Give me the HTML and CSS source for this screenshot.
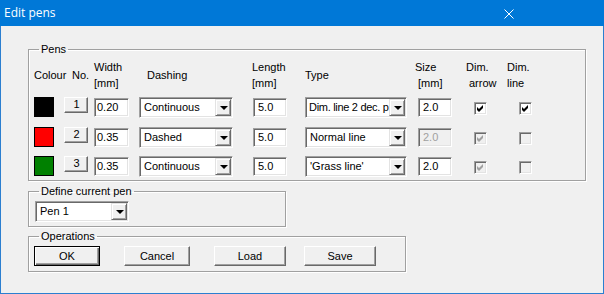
FILE: index.html
```html
<!DOCTYPE html>
<html lang="en">

<head>
    <meta charset="UTF-8">
    <title>Edit pens</title>
    <link rel="stylesheet" href="styles.css">
</head>

<body>
    <div class="window">
        <!-- title bar -->
        <div class="titlebar">
            <span class="title">Edit pens</span>
            <svg class="close" width="10" height="10" viewBox="0 0 10 10">
                <path d="M0.5 0.5 L9.5 9.5 M9.5 0.5 L0.5 9.5" stroke="#fff" stroke-width="1" fill="none" />
            </svg>
        </div>

        <div class="client">
            <!-- pens table -->
            <fieldset class="group pens-group">
                <legend>Pens</legend>
                <div class="pen-grid">
                    <div class="hd one">Colour</div>
                    <div class="hd one hd-no">No.</div>
                    <div class="hd">Width<br>[mm]</div>
                    <div class="hd one hd-dash">Dashing</div>
                    <div class="hd">Length<br>[mm]</div>
                    <div class="hd one">Type</div>
                    <div class="hd hd-size">Size<br><span class="mm">[mm]</span></div>
                    <div class="hd">Dim.<br><span class="arrow">arrow</span></div>
                    <div class="hd">Dim.<br>line</div>

                    <!-- pen 1 -->
                    <div><span class="swatch black"></span></div>
                    <div><span class="btn-no">1</span></div>
                    <div><span class="field w-width">0.20</span></div>
                    <div><div class="combo w-dash"><span class="combo-text">Continuous</span><span class="combo-btn"><i class="tri"></i></span></div></div>
                    <div><span class="field w-len pad">5.0</span></div>
                    <div><div class="combo w-type"><span class="combo-text tight">Dim. line 2 dec. p</span><span class="combo-btn"><i class="tri"></i></span></div></div>
                    <div><span class="field w-size pad">2.0</span></div>
                    <div><span class="check c-arrow"><svg width="7" height="7" viewBox="0 0 7 7"><path d="M0 2 L2 4 L6 0 V3 L2 7 L0 5 Z" fill="#000"/></svg></span></div>
                    <div><span class="check c-line"><svg width="7" height="7" viewBox="0 0 7 7"><path d="M0 2 L2 4 L6 0 V3 L2 7 L0 5 Z" fill="#000"/></svg></span></div>

                    <!-- pen 2 -->
                    <div><span class="swatch red"></span></div>
                    <div><span class="btn-no">2</span></div>
                    <div><span class="field w-width">0.35</span></div>
                    <div><div class="combo w-dash"><span class="combo-text">Dashed</span><span class="combo-btn"><i class="tri"></i></span></div></div>
                    <div><span class="field w-len pad">5.0</span></div>
                    <div><div class="combo w-type"><span class="combo-text">Normal line</span><span class="combo-btn"><i class="tri"></i></span></div></div>
                    <div><span class="field w-size pad disabled">2.0</span></div>
                    <div><span class="check c-arrow disabled"><svg width="7" height="7" viewBox="0 0 7 7"><path d="M0 2 L2 4 L6 0 V3 L2 7 L0 5 Z" fill="#a0a0a0"/></svg></span></div>
                    <div><span class="check c-line disabled"></span></div>

                    <!-- pen 3 -->
                    <div><span class="swatch green"></span></div>
                    <div><span class="btn-no">3</span></div>
                    <div><span class="field w-width">0.35</span></div>
                    <div><div class="combo w-dash"><span class="combo-text">Continuous</span><span class="combo-btn"><i class="tri"></i></span></div></div>
                    <div><span class="field w-len pad">5.0</span></div>
                    <div><div class="combo w-type"><span class="combo-text">'Grass line'</span><span class="combo-btn"><i class="tri"></i></span></div></div>
                    <div><span class="field w-size pad">2.0</span></div>
                    <div><span class="check c-arrow disabled"><svg width="7" height="7" viewBox="0 0 7 7"><path d="M0 2 L2 4 L6 0 V3 L2 7 L0 5 Z" fill="#a0a0a0"/></svg></span></div>
                    <div><span class="check c-line disabled"></span></div>
                </div>
            </fieldset>

            <!-- current pen -->
            <fieldset class="group current-group">
                <legend>Define current pen</legend>
                <div class="current-body">
                    <div class="combo w-pen"><span class="combo-text">Pen 1</span><span class="combo-btn"><i class="tri"></i></span></div>
                </div>
            </fieldset>

            <!-- operations -->
            <fieldset class="group ops-group">
                <legend>Operations</legend>
                <div class="ops-body">
                    <span class="push default b-ok">OK</span>
                    <span class="push b-cancel">Cancel</span>
                    <span class="push b-load">Load</span>
                    <span class="push b-save">Save</span>
                </div>
            </fieldset>
        </div>
    </div>
</body>

</html>
```

FILE: styles.css
```css
/* page */
body {
    margin: 0;
    font-family: "Liberation Sans", Arial, sans-serif;
    font-size: 11px;
    color: #000;
    background: #f0f0f0;
}

.window {
    width: 604px;
    height: 294px;
    box-sizing: border-box;
    border: 1px solid #2b7fd0;
    border-top: none;
    background: #f0f0f0;
}

/* title bar */
.titlebar {
    height: 26px;
    margin: 0 -1px;
    background: #0078d7;
    display: flex;
    align-items: center;
    justify-content: space-between;
    padding: 0 90px 0 4px;
}

.title {
    font-family: "Open Sans", "Noto Sans", sans-serif;
    font-size: 12px;
    color: #fff;
    margin-top: -1px;
}

.close {
    margin-top: 1px;
}

/* client area */
.client {
    padding: 17px 0 0 27px;
}

/* group boxes */
.group {
    margin: 0;
    padding: 0;
    border: 1px solid #a0a0a0;
    box-shadow: inset 1px 1px 0 #fff, 1px 1px 0 #fff;
    min-width: 0;
    box-sizing: border-box;
}

.group legend {
    margin-left: 10px;
    padding: 0 2px;
    line-height: 13px;
    font-size: 11px;
}

.pens-group {
    width: 558px;
}

.current-group {
    width: 258px;
    margin-top: 4px;
}

.ops-group {
    width: 378px;
    margin-top: 3px;
}

/* pens grid */
.pen-grid {
    display: grid;
    grid-template-columns: 30px 30px 45px 113px 53px 110px 51px 41px 40px;
    grid-template-rows: 38px 30px 29px 20px;
    padding: 3px 0 4px 5px;
}

.hd {
    line-height: 16px;
    white-space: nowrap;
}

.hd.one {
    padding-top: 8px;
}

.hd-no {
    padding-left: 8px;
}

.hd-dash {
    padding-left: 8px;
}

.hd-size .mm {
    padding-left: 3px;
}

.hd .arrow {
    padding-left: 3px;
}

/* colour swatches */
.swatch {
    display: block;
    width: 20px;
    height: 20px;
    box-sizing: border-box;
    border: 1px solid #000;
}

.black { background: #000; }
.red { background: #ff0000; }
.green { background: #008000; }

/* numbered pen buttons */
.btn-no {
    display: block;
    width: 24px;
    height: 16px;
    box-sizing: border-box;
    background: #f0f0f0;
    border-top: 1px solid #fff;
    border-left: 1px solid #fff;
    border-right: 1px solid #696969;
    border-bottom: 1px solid #696969;
    box-shadow: inset -1px -1px 0 #a0a0a0;
    text-align: center;
    line-height: 13px;
    padding-left: 1px;
}

/* sunken edit fields */
.field {
    display: block;
    height: 19px;
    box-sizing: border-box;
    margin-top: 1px;
    background: #fff;
    border-top: 1px solid #a0a0a0;
    border-left: 1px solid #a0a0a0;
    border-right: 1px solid #fff;
    border-bottom: 1px solid #fff;
    box-shadow: inset 1px 1px 0 #696969, inset -1px -1px 0 #e3e3e3;
    padding-left: 2px;
    line-height: 17px;
}

.field.pad {
    padding-left: 4px;
}

.field.disabled {
    background: #f0f0f0;
    color: #a0a0a0;
}

.w-width { width: 35px; }
.w-len { width: 34px; margin-left: 1px; }
.w-size { width: 34px; margin-left: 3px; }

/* combo boxes */
.combo {
    display: flex;
    height: 21px;
    box-sizing: border-box;
    background: #fff;
    border-top: 1px solid #a0a0a0;
    border-left: 1px solid #a0a0a0;
    border-right: 1px solid #fff;
    border-bottom: 1px solid #fff;
    box-shadow: inset 1px 1px 0 #696969, inset -1px -1px 0 #e3e3e3;
    padding: 1px;
}

.combo-text {
    flex: 1;
    overflow: hidden;
    white-space: nowrap;
    line-height: 17px;
    padding-left: 3px;
}

.combo-text.tight {
    padding-left: 2px;
    letter-spacing: -0.3px;
}

.combo-btn {
    width: 16px;
    height: 17px;
    box-sizing: border-box;
    background: #f0f0f0;
    border-top: 1px solid #e3e3e3;
    border-left: 1px solid #e3e3e3;
    border-right: 1px solid #696969;
    border-bottom: 1px solid #696969;
    box-shadow: inset 1px 1px 0 #fff, inset -1px -1px 0 #a0a0a0;
    display: flex;
    align-items: center;
    justify-content: center;
}

.tri {
    width: 0;
    height: 0;
    border-left: 4px solid transparent;
    border-right: 4px solid transparent;
    border-top: 4px solid #000;
    margin-left: 1px;
}

.w-dash { width: 94px; }
.w-type { width: 102px; }
.w-pen { width: 94px; }

/* check boxes */
.check {
    display: flex;
    align-items: center;
    justify-content: center;
    width: 13px;
    height: 13px;
    box-sizing: border-box;
    margin-top: 5px;
    background: #fff;
    border-top: 1px solid #a0a0a0;
    border-left: 1px solid #a0a0a0;
    border-right: 1px solid #fff;
    border-bottom: 1px solid #fff;
    box-shadow: inset 1px 1px 0 #696969, inset -1px -1px 0 #e3e3e3;
}

.check.disabled {
    background: #f0f0f0;
}

.c-arrow { margin-left: 8px; }
.c-line { margin-left: 12px; }

/* current pen group */
.current-body {
    padding: 3px 0 4px 6px;
}

/* operations group */
.ops-body {
    display: flex;
    padding: 3px 0 5px 5px;
}

.push {
    display: block;
    height: 20px;
    box-sizing: border-box;
    background: #f0f0f0;
    border-top: 1px solid #fff;
    border-left: 1px solid #fff;
    border-right: 1px solid #696969;
    border-bottom: 1px solid #696969;
    box-shadow: inset -1px -1px 0 #a0a0a0;
    text-align: center;
    line-height: 18px;
}

.push.default {
    border: 1px solid #000;
    box-shadow: inset 1px 1px 0 #fff, inset -1px -1px 0 #696969, inset -2px -2px 0 #a0a0a0;
}

.b-ok { width: 66px; }
.b-cancel { width: 66px; margin-left: 24px; }
.b-load { width: 72px; margin-left: 24px; }
.b-save { width: 72px; margin-left: 18px; }
```
